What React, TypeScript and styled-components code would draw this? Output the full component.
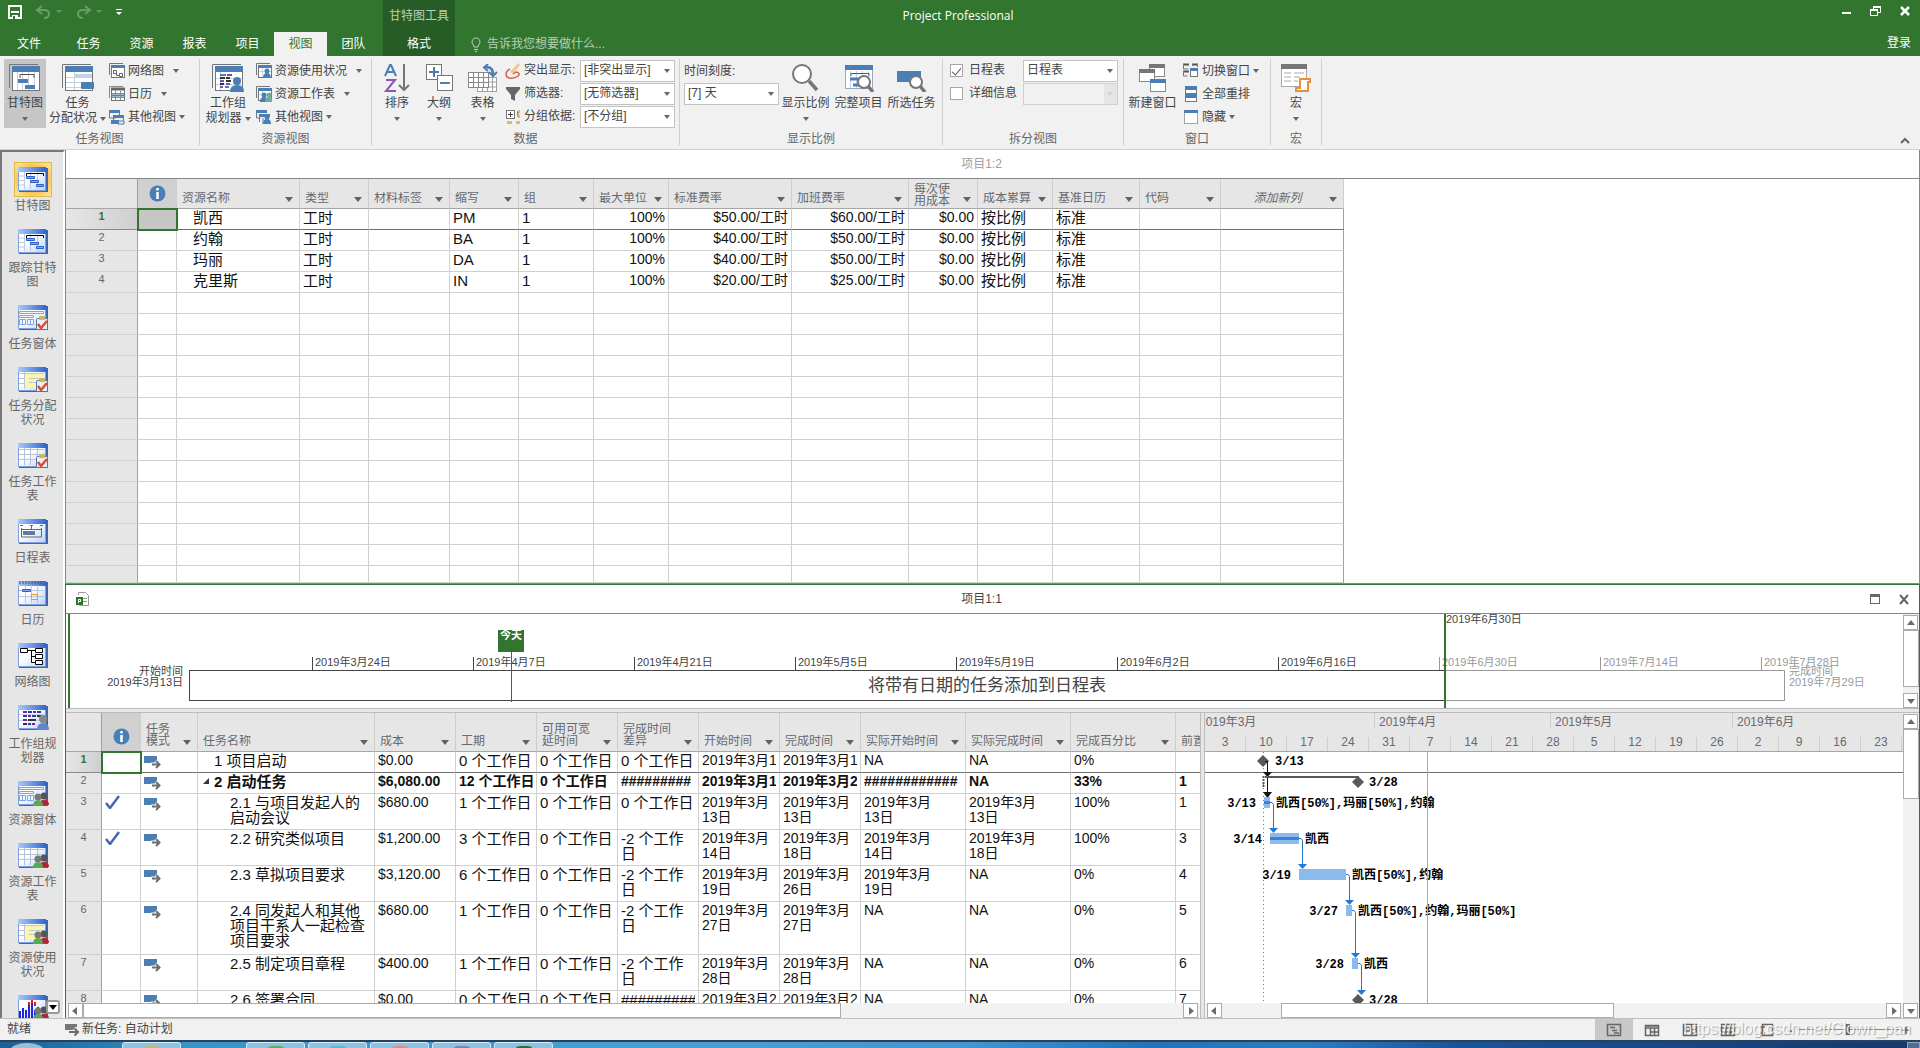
import React from "react";
import styled, { createGlobalStyle, css } from "styled-components";

const GREEN = "#31752f";
const BLUE = "#4a7eb5";
const GREY = "#767676";

const GlobalStyle = createGlobalStyle`
  * { box-sizing: border-box; }
  body { margin: 0; background: #fff; }
  body, button, select, input {
    font-family: "Liberation Sans", "Noto Sans CJK SC", sans-serif;
    font-size: 12px;
    line-height: 15px;
    color: #444;
  }
  button { border: 0; padding: 0; background: none; }
  svg { display: block; flex: none; }
`;

const Page = styled.div`
  display: flex;
  flex-direction: column;
  height: 100vh;
  overflow: hidden;
`;

/* ---------- title bar ---------- */

const Header = styled.header`
  display: grid;
  flex: none;
  height: 56px;
  background: ${GREEN};
  color: #fff;
`;
const HeaderLayer = styled.div`
  grid-area: 1 / 1;
  display: flex;
`;
const AppTitle = styled.h1`
  grid-area: 1 / 1;
  justify-self: center;
  margin: 0;
  padding-right: 4px;
  font: 400 12px/32px "Open Sans", "Noto Sans", sans-serif;
`;
const HeaderLeft = styled.div`
  display: flex;
  flex-direction: column;
  width: 383px;
`;
const QuickBar = styled.div`
  display: flex;
  align-items: center;
  height: 24px;
  padding-left: 8px;
  gap: 11px;
`;
const Tabs = styled.nav`
  display: flex;
  height: 24px;
  margin-top: auto;
`;
const Tab = styled.button<{ $active?: boolean; $wide?: boolean }>`
  width: ${(p) => (p.$wide ? "62px" : "53px")};
  padding: 0 ${(p) => (p.$wide ? "4px" : "0")} 0 0;
  color: ${(p) => (p.$active ? GREEN : "#fff")};
  background: ${(p) => (p.$active ? "#f1f1f1" : "transparent")};
`;
const ContextTabs = styled.div`
  display: flex;
  flex-direction: column;
  justify-content: space-between;
  width: 72px;
  background: #265c25;
  color: #b9cfb8;
  text-align: center;
  line-height: 32px;
`;
const ContextTab = styled.button`
  height: 24px;
  color: #fff;
`;
const TellMe = styled.button`
  display: flex;
  align-items: center;
  align-self: flex-end;
  gap: 5px;
  height: 24px;
  padding-left: 15px;
  color: #b9cfb8;
`;
const HeaderRight = styled.div`
  display: flex;
  flex-direction: column;
  justify-content: space-between;
  align-items: flex-end;
  height: 56px;
  margin-left: auto;
  padding: 4px 9px 5px 0;
`;
const WindowButtons = styled.div`
  display: flex;
  gap: 16px;
`;
const SignIn = styled.a`
  color: #fff;
  text-decoration: none;
`;

/* ---------- ribbon ---------- */

const Ribbon = styled.div`
  display: flex;
  flex: none;
  height: 94px;
  background: #f1f1f1;
  border-bottom: 1px solid #d2d2d2;
`;
const GroupBox = styled.section<{ $width: number }>`
  display: flex;
  flex-direction: column;
  flex: none;
  width: ${(p) => p.$width}px;
  margin: 3px 0 4px;
  border-right: 1px solid #d0d0d0;
`;
const GroupBody = styled.div<{ $pad: number; $gap: number }>`
  display: flex;
  height: 70px;
  gap: ${(p) => p.$gap}px;
  padding-left: ${(p) => p.$pad}px;
`;
const GroupLabel = styled.div`
  margin-top: 5px;
  line-height: 12px;
  text-align: center;
  color: #666;
`;
const BigBtn = styled.button<{ $width: number; $pressed?: boolean }>`
  display: flex;
  flex-direction: column;
  align-items: center;
  flex: none;
  width: ${(p) => p.$width}px;
  padding-top: 5px;
  white-space: nowrap;
  background: ${(p) => (p.$pressed ? "#c6c6c6" : "transparent")};
`;
const BigIcon = styled.span`
  height: 28px;
  margin-bottom: 4px;
`;
const BigLine = styled.span`
  display: flex;
  align-items: center;
  justify-content: center;
  gap: 3px;
  height: 15px;
`;
const Column = styled.div`
  display: grid;
  grid-auto-rows: 23px;
  align-content: start;
  justify-items: start;
`;
const SmallBtn = styled.button<{ $gap?: number }>`
  display: flex;
  align-items: center;
  height: 23px;
  padding-top: 1px;
  white-space: nowrap;
  svg { margin-right: 3px; }
  i { margin-left: ${(p) => p.$gap ?? 3}px; }
`;
const Caret = styled.i<{ $light?: boolean }>`
  display: inline-block;
  border: 3px solid transparent;
  border-top: 4px solid ${(p) => (p.$light ? "#b5b5b5" : "#666")};
  border-bottom: 0;
`;
const FieldRow = styled.label`
  display: grid;
  grid-template-columns: 19px 56px auto;
  align-items: center;
  height: 23px;
  white-space: nowrap;
`;
const SelectBox = styled.span`
  display: grid;
  align-items: center;
  width: 95px;
  ${Caret} {
    grid-area: 1 / 1;
    justify-self: end;
    margin-right: 5px;
    pointer-events: none;
  }
`;
const Select = styled.select`
  grid-area: 1 / 1;
  appearance: none;
  width: 100%;
  height: 22px;
  padding: 0 3px;
  border: 1px solid #c3c3c3;
  border-radius: 0;
  background: #fff;
  &:disabled { background: linear-gradient(90deg, #f1f1f1 80px, #e1e1e1 80px); }
`;
const Check = styled.label`
  display: flex;
  align-items: center;
  gap: 6px;
  width: 73px;
  height: 23px;
  white-space: nowrap;
`;
const Tick = styled.input`
  appearance: none;
  display: grid;
  place-items: center;
  width: 13px;
  height: 13px;
  margin: 0;
  border: 1px solid #a6a6a6;
  background: #fff;
  &:checked::after {
    content: "";
    width: 4px;
    height: 8px;
    border: solid #555;
    border-width: 0 1px 1px 0;
    transform: rotate(40deg);
  }
`;
const CollapseBtn = styled.button`
  align-self: flex-end;
  margin: 0 10px 5px auto;
`;

/* ---------- body ---------- */

const Body = styled.div`
  display: grid;
  grid-template-columns: 65px minmax(0, 1fr);
  flex: 1;
  min-height: 0;
`;
const ViewBar = styled.nav`
  display: grid;
  min-height: 0;
  overflow: hidden;
  border-left: 2px solid #777;
  border-top: 2px solid #777;
  border-right: 2px solid #fff;
  background: #e6e6e6;
`;
const ViewList = styled.div`
  grid-area: 1 / 1;
  display: flex;
  flex-direction: column;
  align-items: center;
  gap: 11px;
  min-height: 0;
  overflow: hidden;
  padding-top: 10px;
`;
const ViewItem = styled.button`
  display: flex;
  flex-direction: column;
  align-items: center;
  flex: none;
  width: 61px;
  color: #666;
  line-height: 14px;
  white-space: pre;
`;
const ViewIcon = styled.span<{ $active?: boolean }>`
  display: grid;
  place-items: center;
  width: 38px;
  height: 35px;
  margin-bottom: 2px;
  ${(p) =>
    p.$active &&
    css`
      border: 1px solid #e0b94e;
      background: radial-gradient(#f7a81b 30%, #fbe08a 85%);
    `}
`;
const MoreViews = styled.button`
  grid-area: 1 / 1;
  place-self: end;
  display: grid;
  place-items: center;
  width: 14px;
  height: 14px;
  margin: 0 3px 4px 0;
  border: 2px solid #999;
  border-radius: 3px;
  background: #fff;
`;

const Main = styled.main`
  display: flex;
  flex-direction: column;
  min-width: 0;
  min-height: 0;
`;
const TopWindow = styled.section`
  flex: none;
  border: solid #84888c;
  border-width: 0 1px 1px;
  background: #fff;
`;
const BottomWindow = styled.section`
  display: flex;
  flex-direction: column;
  flex: 1;
  min-height: 0;
  border: solid ${GREEN};
  border-width: 1px 1px 0;
  background: #fff;
`;
const WindowTitle = styled.div<{ $dim?: boolean }>`
  display: grid;
  grid-template-columns: 1fr auto 1fr;
  align-items: center;
  flex: none;
  height: 29px;
  padding: 0 9px;
  border-bottom: 1px solid #84888c;
  color: ${(p) => (p.$dim ? "#a0a0a0" : "#444")};
`;
const WindowName = styled.span`
  grid-column: 2;
  padding-right: 22px;
`;
const TitleTools = styled.span`
  display: flex;
  justify-content: flex-end;
  gap: 18px;
`;

/* ---------- data grids ---------- */

const Grid = styled.table<{ $width: number }>`
  width: ${(p) => p.$width}px;
  table-layout: fixed;
  border-collapse: separate;
  border-spacing: 0;
`;
const HeadCell = styled.th<{ $h: number; $dark?: boolean; $edge?: boolean }>`
  height: ${(p) => p.$h}px;
  padding: 0;
  vertical-align: bottom;
  font-weight: 400;
  text-align: left;
  color: #666a70;
  background: ${(p) => (p.$dark ? "#d0d0d0" : "#e6e6e6")};
  border-right: 1px solid ${(p) => (p.$edge ? "#a0a0a0" : "#cdcdcd")};
  border-bottom: 1px solid #a6a6a6;
`;
const HeadInner = styled.div<{ $drop: number; $center?: boolean }>`
  display: flex;
  align-items: flex-end;
  justify-content: space-between;
  padding: 0 6px ${(p) => p.$drop}px 5px;
  line-height: 12px;
  white-space: pre;
  overflow: hidden;
  span { flex: 1; text-align: ${(p) => (p.$center ? "center" : "left")}; }
  i { margin-bottom: ${(p) => 6 - p.$drop}px; }
`;
const HeadArrow = styled.i`
  flex: none;
  border: 4px solid transparent;
  border-top: 5px solid #5f6368;
  border-bottom: 0;
`;
const HeadIcon = styled.div`
  display: grid;
  justify-content: center;
  padding-bottom: 6px;
`;
const RowNo = styled.th<{ $current?: boolean }>`
  padding: 0;
  vertical-align: top;
  text-align: center;
  font-size: 11px;
  font-weight: ${(p) => (p.$current ? 700 : 400)};
  color: ${(p) => (p.$current ? GREEN : "#666")};
  background: ${(p) => (p.$current ? "linear-gradient(90deg, #e6e6e6, #cfcfcf)" : "#e6e6e6")};
  border-right: 1px solid #a0a0a0;
  border-bottom: 1px solid ${(p) => (p.$current ? "#8a8a8a" : "#d0d0d0")};
`;
const Cell = styled.td<{
  $current?: boolean;
  $bold?: boolean;
  $right?: boolean;
  $small?: boolean;
  $indent?: number;
  $last?: boolean;
}>`
  padding: 1px 3px 0 ${(p) => p.$indent ?? 3}px;
  vertical-align: top;
  font-size: ${(p) => (p.$small ? "14px" : "15px")};
  line-height: 15px;
  font-weight: ${(p) => (p.$bold ? 700 : 400)};
  text-align: ${(p) => (p.$right ? "right" : "left")};
  color: #111;
  white-space: pre;
  border-right: 1px solid ${(p) => (p.$last ? "#a0a0a0" : "#d0d0d0")};
  border-bottom: 1px solid ${(p) => (p.$current ? "#6e6e6e" : "#d0d0d0")};
`;
const Clip = styled.div`
  overflow: hidden;
`;
const SelectedCell = styled(Cell)<{ $filled?: boolean }>`
  outline: 2px solid ${GREEN};
  outline-offset: -1px;
  background: ${(p) => (p.$filled ? "#c6c6c6" : "#fff")};
`;
const Row = styled.tr<{ $h: number }>`
  height: ${(p) => p.$h}px;
`;
const NameText = styled.div`
  display: flex;
`;
const Outline = styled.span<{ $w: number }>`
  width: ${(p) => p.$w}px;
  flex: none;
  svg { margin: 4px 0 0 5px; }
`;

/* ---------- timeline ---------- */

const TimelineRow = styled.div`
  display: flex;
  flex: none;
  height: 94px;
`;
const Timeline = styled.div`
  position: relative;
  display: grid;
  grid-template-columns: 119px minmax(0, 1fr) 118px;
  grid-template-rows: 43px 13px 31px;
  flex: 1;
  min-width: 0;
  overflow: hidden;
  margin-left: 2px;
  border-left: 2px solid ${GREEN};
  font-size: 11px;
  line-height: 11px;
  white-space: nowrap;
`;
const TickRow = styled.div`
  grid-area: 2 / 2;
  display: flex;
  min-width: 0;
  padding-left: 123px;
`;
const DateTick = styled.div<{ $dim?: boolean }>`
  flex: 0 0 161px;
  height: 13px;
  padding-left: 2px;
  line-height: 10px;
  border-left: 1px solid ${(p) => (p.$dim ? "#999" : "#444")};
  color: ${(p) => (p.$dim ? "#999" : "#444")};
`;
const Span = styled.div`
  grid-area: 3 / 2;
  display: grid;
  grid-template-columns: 1256fr 339fr;
`;
const SpanPart = styled.div<{ $dim?: boolean }>`
  grid-area: 1 / ${(p) => (p.$dim ? 2 : 1)};
  border: 1px solid ${(p) => (p.$dim ? "#999" : "#444")};
  border-width: ${(p) => (p.$dim ? "1px 1px 1px 0" : "1px 0 1px 1px")};
`;
const SpanText = styled.div`
  grid-area: 1 / 1 / 2 / 3;
  place-self: center;
  font-size: 17px;
  line-height: 20px;
  color: #444;
`;
const EndLabel = styled.div<{ $end?: boolean }>`
  grid-area: 3 / ${(p) => (p.$end ? 3 : 1)};
  padding: 0 ${(p) => (p.$end ? "0 0 4px" : "6px 0 0")};
  margin-top: -4px;
  text-align: ${(p) => (p.$end ? "left" : "right")};
  color: ${(p) => (p.$end ? "#999" : "#444")};
`;
const TodayMark = styled.div`
  position: absolute;
  left: 428px;
  top: 16px;
  width: 26px;
  height: 22px;
  background: ${GREEN};
  color: #fff;
  font-weight: 700;
  text-align: center;
  &::after {
    content: "";
    position: absolute;
    left: 13px;
    top: 22px;
    width: 1px;
    height: 50px;
    background: ${GREEN};
  }
`;
const RangeMark = styled.div`
  position: absolute;
  left: 1374px;
  top: 0;
  height: 94px;
  border-left: 2px solid ${GREEN};
  color: #444;
`;

/* ---------- scroll bars and splitters ---------- */

const HSplit = styled.div`
  flex: none;
  height: 5px;
  border: solid #bcbcbc;
  border-width: 1px 0;
  background: #e6e6e6;
`;
const VSplit = styled.div`
  border: solid #bcbcbc;
  border-width: 0 1px;
  background: #e6e6e6;
`;
const ScrollBar = styled.div<{ $vertical?: boolean }>`
  display: flex;
  flex: none;
  flex-direction: ${(p) => (p.$vertical ? "column" : "row")};
  ${(p) => (p.$vertical ? "width: 16px; padding: 1px 0 0;" : "height: 15px; padding: 0 2px;")}
  background: #f2f2f2;
`;
const ScrollBtn = styled.button`
  display: grid;
  place-items: center;
  flex: none;
  width: 15px;
  height: 15px;
  border: 1px solid #ababab;
  background: #fff;
`;
const Thumb = styled.div<{ $grow: number }>`
  flex: ${(p) => p.$grow} 1 0;
  border: 1px solid #ababab;
  background: #fff;
`;
const Track = styled.div<{ $grow: number }>`
  flex: ${(p) => p.$grow} 1 0;
`;

const SplitArea = styled.div`
  display: grid;
  grid-template-columns: minmax(0, 1134fr) 5px minmax(0, 698fr) 16px;
  grid-template-rows: minmax(0, 1fr);
  flex: 1;
  min-height: 0;
`;
const Pane = styled.div`
  display: flex;
  flex-direction: column;
  min-width: 0;
  min-height: 0;
`;
const PaneView = styled.div`
  flex: 1;
  min-height: 0;
  overflow: hidden;
`;
const Scale = styled.div`
  height: 39px;
  overflow: hidden;
  background: #e6e6e6;
  border-bottom: 1px solid #a6a6a6;
  color: #666a70;
`;
const Months = styled.div`
  display: flex;
  height: 24px;
`;
const Month = styled.div<{ $width: number; $cut?: boolean }>`
  flex: none;
  width: ${(p) => p.$width}px;
  height: 16px;
  padding: 2px 0 0 4px;
  border-right: 1px solid #cdcdcd;
  white-space: nowrap;
  overflow: hidden;
  text-indent: ${(p) => (p.$cut ? "-10px" : "0")};
`;
const Days = styled.div`
  display: flex;
`;
const Day = styled.div`
  flex: 0 0 41px;
  height: 14px;
  line-height: 10px;
  text-align: center;
  border-right: 1px solid #cdcdcd;
`;
const GanttText = styled.text`
  font: 700 12px "Liberation Mono", "Noto Sans CJK SC", monospace;
  fill: #000;
`;

/* ---------- status bar and task bar ---------- */

const Status = styled.footer`
  display: flex;
  align-items: center;
  flex: none;
  height: 22px;
  padding: 0 9px 0 7px;
  border-top: 1px solid #c0c0c0;
  background: #f1f1f1;
  white-space: nowrap;
`;
const StatusTask = styled.button`
  display: flex;
  align-items: center;
  gap: 1px;
  margin-left: 34px;
`;
const StatusRight = styled.div`
  position: relative;
  display: flex;
  align-items: center;
  margin-left: auto;
`;
const ViewBtn = styled.button<{ $active?: boolean }>`
  display: grid;
  place-items: center;
  width: 38px;
  height: 21px;
  background: ${(p) => (p.$active ? "#c8c8c8" : "transparent")};
`;
const Zoom = styled.input`
  appearance: none;
  width: 102px;
  height: 1px;
  margin: 0 2px;
  background: #8a8a8a;
  &::-webkit-slider-thumb {
    appearance: none;
    width: 4px;
    height: 11px;
    background: #666;
  }
`;
const ZoomBtn = styled.button`
  width: 10px;
  font-weight: 700;
  font-size: 15px;
  color: #666;
`;
const Watermark = styled.span`
  position: absolute;
  right: 0;
  top: 0;
  font-size: 16px;
  line-height: 20px;
  color: rgba(255, 255, 255, 0.85);
  text-shadow: 1px 1px 1px rgba(110, 110, 110, 0.6);
  pointer-events: none;
`;
const TaskBar = styled.div`
  display: flex;
  flex: none;
  height: 8px;
  overflow: hidden;
  border-top: 2px solid #27425c;
  background: linear-gradient(90deg, #1b5f94 0, #3a94c8 10%, #48a0d2 35%, #4796cf 50%, #2472b8 60%, #2f7cc0 68%, #1b5496 76%, #14396c 100%);
`;
const Orb = styled.div`
  width: 34px;
  height: 16px;
  margin: 1px 78px 0 10px;
  border-radius: 50%;
  background: #9dbdd4;
`;
const TaskBtn = styled.button<{ $gapAfter?: number; $tint: string }>`
  display: flex;
  justify-content: center;
  flex: none;
  width: 59px;
  height: 12px;
  margin-right: ${(p) => p.$gapAfter ?? 3}px;
  border: 1px solid #d6ecf8;
  border-radius: 3px 3px 0 0;
  background: #8cc3e2;
  &::after {
    content: "";
    width: 20px;
    height: 10px;
    margin-top: 3px;
    border-radius: 6px 6px 0 0;
    background: ${(p) => p.$tint};
  }
`;
const ShowDesktop = styled.button`
  width: 13px;
  height: 12px;
  margin-left: auto;
  border: 1px solid #8fa6bd;
  background: #4b6d92;
`;

/* ---------- ribbon icons ---------- */

const Svg = ({ w, h, children }: { w: number; h: number; children: React.ReactNode }) => (
  <svg width={w} height={h} viewBox={`0 0 ${w} ${h}`} aria-hidden="true">
    {children}
  </svg>
);

const BigSheet = ({ children }: { children: React.ReactNode }) => (
  <Svg w={32} h={28}>
    <path d="M.5 24V.5H29" fill="none" stroke={GREY} />
    <rect x="3.500" y="3.500" width="27" height="23" fill="#fff" stroke={GREY} />
    <rect x="3" y="2" width="28" height="6" fill={BLUE} />
    {children}
  </Svg>
);
const GanttBig = () => (
  <BigSheet>
    <path d="M8.500 8v18M13.500 8v18M19.500 8v18M25.500 8v18" stroke="#c3d3e5" />
    <path d="M11 14v-3.500h14V14" fill="none" stroke="#555" />
    <rect x="9" y="15" width="10" height="4" fill={BLUE} />
    <rect x="16" y="21" width="10" height="4" fill={BLUE} />
  </BigSheet>
);
const UsageBig = () => (
  <BigSheet>
    <path d="M4 13.500h26M4 18.500h26M4 23.500h26M12.500 8v18" stroke="#c3d3e5" />
    <rect x="13" y="10" width="17" height="3" fill="#c3d3e5" />
    <rect x="19" y="18" width="13" height="7" rx="1" fill={BLUE} />
  </BigSheet>
);
const TeamBig = () => (
  <BigSheet>
    <path d="M8.500 8v18M4 14.500h26M4 20.500h26" stroke="#c3d3e5" />
    <path d="M8 11h6M13 23h4" stroke={BLUE} strokeWidth="2" />
    <path d="M15 11h5M8 17h4M14 20h4M8 23h3" stroke="#7d4ba8" strokeWidth="2" />
    <path d="M8 14h5M14 17h5M8 20h4M14 14h4" stroke="#333" strokeWidth="2" />
    <circle cx="25" cy="17" r="4" fill={BLUE} />
    <path d="M18 28q0-7 7-7t7 7z" fill={BLUE} />
  </BigSheet>
);
const SortBig = () => (
  <Svg w={28} h={28}>
    <path d="M2 12 7 1h1l5 11M4 8h7" fill="none" stroke={BLUE} strokeWidth="2" />
    <path d="M3 16h9L3 27h10" fill="none" stroke="#8a56b8" strokeWidth="2" />
    <path d="M21 0v26M16 21l5 5 5-5" fill="none" stroke={GREY} strokeWidth="2" />
  </Svg>
);
const OutlineBig = () => (
  <Svg w={28} h={28}>
    <rect x="1.500" y=".5" width="15" height="15" fill="#fff" stroke={GREY} />
    <path d="M9 3v10M4 8h10" stroke={BLUE} strokeWidth="2" />
    <rect x="12.500" y="11.500" width="15" height="15" fill="#fff" stroke={GREY} />
    <path d="M15 19h10" stroke={BLUE} strokeWidth="2" />
  </Svg>
);
const TablesBig = () => (
  <Svg w={30} h={28}>
    <rect x="9.500" y="13.500" width="19" height="14" fill="#fff" stroke="#a0a0a0" />
    <path d="M10 18h18M10 23h18M14.500 14v14M19.500 14v14M24.500 14v14" stroke="#a0a0a0" />
    <rect x=".5" y="8.500" width="20" height="15" fill="#fff" stroke="#888" />
    <path d="M1 13.500h19M1 18.500h19M5.500 9v15M10.500 9v15M15.500 9v15" stroke="#888" />
    <path d="M16 3.500q9-2 9 7" fill="none" stroke={BLUE} strokeWidth="2.500" />
    <path d="M20 0l-4 3.500 4 3.500M21 8l4 4 4-4" fill="none" stroke={BLUE} strokeWidth="2" />
  </Svg>
);
const Lens = ({ x, y, r }: { x: number; y: number; r: number }) => (
  <>
    <circle cx={x} cy={y} r={r} fill="#fff" stroke={GREY} strokeWidth="2" />
    <path d={`M${x + r - 2} ${y + r - 2}l${r - 1} ${r}`} stroke={GREY} strokeWidth="3.500" />
  </>
);
const ZoomBig = () => (
  <Svg w={28} h={28}>
    <Lens x={10} y={10} r={9} />
  </Svg>
);
const WholeBig = () => (
  <Svg w={30} h={28}>
    <rect x="1.500" y="2.500" width="27" height="22" fill="#fff" stroke="#9ab" />
    <rect x="1" y="1" width="28" height="5" fill={BLUE} />
    <path d="M6.500 7v17M12.500 7v17M18.500 7v17M24.500 7v17" stroke="#c3d3e5" />
    <path d="M7 12V9.500h18V12" fill="none" stroke="#555" />
    <path d="M6 15h9M9 21h6" stroke={BLUE} strokeWidth="3" />
    <Lens x={20} y={18} r={6} />
  </Svg>
);
const SelectedBig = () => (
  <Svg w={30} h={28}>
    <rect x="0" y="7" width="24" height="11" fill={BLUE} />
    <Lens x={19} y={18} r={6} />
  </Svg>
);
const MiniWindow = ({ x, y, c = GREY }: { x: number; y: number; c?: string }) => (
  <>
    <rect x={x + 0.5} y={y + 0.5} width="15" height="12" fill="#fff" stroke="#8a8a8a" />
    <rect x={x} y={y} width="16" height="4" fill={c} />
  </>
);
const NewWindowBig = () => (
  <Svg w={28} h={28}>
    <MiniWindow x={10} y={0} />
    <MiniWindow x={0} y={5} />
    <MiniWindow x={11} y={15} c={BLUE} />
  </Svg>
);
const MacroBig = () => (
  <Svg w={32} h={28}>
    <rect x="1.500" y="0.500" width="25" height="22" fill="#fff" stroke="#aaa" />
    <rect x="1" y="0" width="26" height="5" fill={GREY} />
    <path d="M4 9h7M4 13h7M4 17h7M14 9h10M14 13h6M14 17h4" stroke="#aaa" />
    <path d="M20 15h10v3h-2v9H16v-3h4z" fill="#fff" stroke="#e68f3c" strokeWidth="2" />
  </Svg>
);

const SmallSheet = ({ children }: { children?: React.ReactNode }) => (
  <Svg w={16} h={16}>
    <path d="M.5 12V.5H14" fill="none" stroke={GREY} />
    <rect x="2.500" y="2.500" width="13" height="12" fill="#fff" stroke={GREY} />
    <rect x="2" y="2" width="14" height="3" fill={BLUE} />
    {children}
  </Svg>
);
const Person = ({ x, y, c = BLUE }: { x: number; y: number; c?: string }) => (
  <>
    <circle cx={x} cy={y} r="2.500" fill={c} />
    <path d={`M${x - 4} ${y + 7}q0-5 4-5t4 5z`} fill={c} />
  </>
);
const NetworkSmall = () => (
  <SmallSheet>
    <path d="M4.500 7.500h3v3h-3zM10.500 10.500h3v3h-3zM7.500 9v3.500h3" fill="none" stroke="#666" />
  </SmallSheet>
);
const CalendarSmall = () => (
  <Svg w={16} h={16}>
    <rect x="2.500" y="2.500" width="13" height="12" fill="#fff" stroke={GREY} />
    <path d="M2 3h14" stroke="#666" strokeWidth="3" />
    <path d="M.5 12V.5H14M3 7.500h12M3 11.500h12M6.500 5v9M11.500 5v9" fill="none" stroke="#8a8a8a" />
    <path d="M7 9.500h4M12 9.500h3M3 9.500h3" stroke={BLUE} strokeWidth="2" />
  </Svg>
);
const OtherSmall = () => (
  <Svg w={16} h={16}>
    <rect x="0" y="1" width="11" height="3" fill={BLUE} />
    <path d="M.5 4v5h6M10.500 4v2" fill="none" stroke={GREY} />
    <rect x="4" y="6" width="11" height="3" fill={BLUE} />
    <path d="M4.500 9v3M14.500 9v3" stroke={GREY} />
    <rect x="2" y="11" width="8" height="4" fill={BLUE} />
    <path d="M9 12h6v3H9" fill="none" stroke={BLUE} />
  </Svg>
);
const ResUsageSmall = () => (
  <SmallSheet>
    <path d="M3 8.500h12M6.500 5v9" stroke="#c3d3e5" />
    <Person x={11} y={8} />
  </SmallSheet>
);
const ResSheetSmall = () => (
  <SmallSheet>
    <path d="M3 8.500h12M6.500 5v9" stroke="#c3d3e5" />
    <Person x={8} y={9} />
    <Person x={13} y={9} c="#6fae95" />
  </SmallSheet>
);
const ResOtherSmall = () => (
  <Svg w={16} h={16}>
    <rect x="0" y="1" width="11" height="3" fill={BLUE} />
    <path d="M.5 4v5h4M3.500 8v5M5 7h6" fill="none" stroke={GREY} />
    <rect x="3" y="5" width="11" height="3" fill={BLUE} />
    <Person x={11} y={8} />
    <path d="M7 9v6" stroke={BLUE} />
  </Svg>
);
const HighlightSmall = () => (
  <Svg w={16} h={16}>
    <path d="M5 9 13 0l2 2-7 9z" fill="#f3c98b" />
    <path d="M5 6q-4 2-4 5t3 4q5 1 9-2 3-3-2-4l-3 2" fill="none" stroke="#d8624a" strokeWidth="1.500" />
  </Svg>
);
const FilterSmall = () => (
  <Svg w={16} h={16}>
    <path d="M1 1h14v2l-5 6v6l-4-2V9L1 3z" fill="#666" />
  </Svg>
);
const GroupSmall = () => (
  <Svg w={16} h={16}>
    <rect x="1.500" y="1.500" width="8" height="8" fill="#fff" stroke={GREY} />
    <path d="M3 5.500h5M5.500 3v5M12 3h1v5" fill="none" stroke="#444" />
    <path d="M13 1h2v3h-2zM2 12h5v3H2zM11 12h4v3h-4zM13 6h2v3h-2z" fill="#e6b86a" />
  </Svg>
);
const SwitchSmall = () => (
  <Svg w={16} h={16}>
    <path d="M0 1.500h6M0 8.500h6M9 1.500h6" stroke="#555" strokeWidth="2" />
    <path d="M.5 1v5h5M.5 8v5h4M9.500 1v2M14.500 1v3" fill="none" stroke={GREY} />
    <rect x="7.500" y="6.500" width="7" height="7" fill="#fff" stroke={GREY} />
    <path d="M7 6.500h8" stroke={BLUE} strokeWidth="3" />
  </Svg>
);
const ArrangeSmall = () => (
  <Svg w={16} h={16}>
    <rect x="2.500" y=".5" width="11" height="15" fill="#fff" stroke={GREY} />
    <path d="M2 2h12M2 10h12" stroke={BLUE} strokeWidth="4" />
    <path d="M2 7.500h12" stroke={GREY} />
  </Svg>
);
const HideSmall = () => (
  <Svg w={16} h={16}>
    <rect x="1.500" y="3.500" width="13" height="11" fill="#fff" stroke="#555" strokeDasharray="1 1" />
    <path d="M1 2.500h14" stroke={BLUE} strokeWidth="3" />
  </Svg>
);

const InfoIcon = () => (
  <Svg w={17} h={17}>
    <circle cx="8.500" cy="8.500" r="8" fill={BLUE} />
    <path d="M8.500 3v2.500M8.500 7v7" stroke="#fff" strokeWidth="2.500" />
  </Svg>
);
const ModeIcon = ({ c = BLUE }: { c?: string }) => (
  <Svg w={17} h={16}>
    <rect x="0" y="3" width="13" height="7" fill={c} />
    <path d="M7 11.500h9M12 7.500l4 4-4 4" fill="none" stroke="#fff" strokeWidth="4" />
    <path d="M8 11.500h7M12 8l3.500 3.500L12 15" fill="none" stroke="#6c6c6c" strokeWidth="2" />
  </Svg>
);
const StatusTaskIcon = () => (
  <Svg w={16} h={14}>
    <rect x="0" y="1" width="12" height="6" fill={GREY} />
    <path d="M4 9h9M9.500 5l4 4-4 4" fill="none" stroke="#f1f1f1" strokeWidth="4" />
    <path d="M4 9h9M9.500 5.500 13 9l-3.500 3.500" fill="none" stroke="#6c6c6c" strokeWidth="2" />
  </Svg>
);
const DoneIcon = () => (
  <Svg w={16} h={14}>
    <path d="M1 8l4 5L14 1" fill="none" stroke="#4568b0" strokeWidth="2.500" />
  </Svg>
);

/* ---------- view bar icons ---------- */

type Kind = "gantt" | "form" | "usage" | "sheet" | "timeline" | "calendar" | "network" | "team" | "graph";
type Badge = "task" | "people" | "person";

const art: Record<Kind, React.ReactNode> = {
  gantt: (
    <>
      <path d="M2 10h6M2 14.500h6M2 19h6M7.500 6v17M13.500 6v17M20.500 6v17" stroke="#c0cbe0" />
      <path d="M9.500 10V7.500h17V10" fill="none" stroke="#000" />
      <path d="M9.500 10.500h8v2h-8zM13.500 14.500h8v2h-8zM19.500 18.500h7v2h-7z" fill="#7fa6f0" stroke="#2f5fc8" />
    </>
  ),
  form: (
    <path d="M2.500 7.500h24v2h-24zM2.500 11.500h14v2h-14zM2.500 15.500h6v5h-6zM10.500 15.500h6v5h-6zM5.500 16v4M13.500 16v4" fill="#f4f8ff" stroke="#7fa3ea" />
  ),
  usage: (
    <>
      <rect x="8" y="8" width="19" height="14" fill="#fbf6a8" />
      <path d="M2 7.500h25M2 12.500h6M2 17.500h6M7.500 6v17M12 12.500h15M12 16.500h15" stroke="#b8c6e2" />
    </>
  ),
  sheet: <path d="M2 7.500h25M2 12.500h25M2 17.500h25M7.500 6v17M13.500 6v17M20.500 6v17" stroke="#b4c2de" />,
  timeline: (
    <>
      <path d="M4.500 10v9h20v-9M14.500 7v5M3 7.500h3M13 7.500h3M23 7.500h3M5 11.500h20" fill="none" stroke="#666" />
      <rect x="6" y="13" width="12" height="4" fill="#5e7ba6" />
    </>
  ),
  calendar: (
    <>
      <path d="M3 1v3M6 1v3M9 1v3M12 1v3M15 1v3M18 1v3M21 1v3M24 1v3" stroke="#555" />
      <path d="M2 10.500h25M2 16.500h25M8.500 5v18M14.500 5v18M20.500 5v18" stroke="#b8c6e2" />
      <path d="M5.500 9.500h8v2h-8z" fill="#7fa6f0" stroke="#2f5fc8" />
      <rect x="14.500" y="14.500" width="6" height="5" fill="none" stroke="#f09a2a" />
    </>
  ),
  network: (
    <path d="M3.500 6.500h7v4h-7zM18.500 6.500h7v4h-7zM18.500 12.500h7v4h-7zM18.500 18.500h7v4h-7zM11 8.500h7M14.500 9v11.500h4M14.500 14.500h4" fill="#fff" stroke="#000" />
  ),
  team: (
    <>
      <path d="M2 10.500h25M2 16.500h25" stroke="#c8d4ea" />
      <path d="M6 8h4M11 12h3M6 16h4M15 20h3M16 8h3" stroke="#7a1fa8" strokeWidth="2" />
      <path d="M11 8h4M6 12h4M15 12h4M11 20h3M20 8h4" stroke="#1d3fb0" strokeWidth="2" />
      <path d="M11 16h8M6 20h4M20 12h4" stroke="#333" strokeWidth="2" />
    </>
  ),
  graph: (
    <>
      <path d="M3 25V17M6 25V14M9 25V16M12 25V11M15 25V9M18 25v-9M21 25v-12" stroke="#1a28e0" strokeWidth="2" />
      <path d="M12 11V8M15 9V6M18 12V8" stroke="#e02020" strokeWidth="2" />
    </>
  ),
};
const badges: Record<Badge, React.ReactNode> = {
  task: (
    <>
      <rect x="19.500" y="14.500" width="11" height="11" rx="1" fill="#e8eefc" stroke="#56719e" />
      <rect x="22" y="12" width="6" height="4" rx="1" fill="#cdb65c" />
      <path d="M21 20l3 4 6-7" fill="none" stroke="#dd4a2c" strokeWidth="2.500" />
    </>
  ),
  people: (
    <>
      <circle cx="27" cy="16" r="3.500" fill="#555" />
      <path d="M22 25q0-5 5-5t5 5z" fill="#b32430" />
      <circle cx="21" cy="17" r="3.500" fill="#777" />
      <path d="M16 26q0-6 5-6t5 6z" fill="#5aa850" />
    </>
  ),
  person: (
    <>
      <circle cx="26" cy="15" r="4" fill="#888" />
      <path d="M20 26q0-7 6-7t6 7z" fill="#6286cc" />
    </>
  ),
};
const ViewArt = ({ kind, badge }: { kind: Kind; badge?: Badge }) => (
  <Svg w={32} h={27}>
    <defs>
      <linearGradient id="bar" x2="1">
        <stop offset="0" stopColor="#a9c8fa" />
        <stop offset="1" stopColor="#3465cf" />
      </linearGradient>
      <linearGradient id="page" x2="1" y2="1">
        <stop offset=".4" stopColor="#fff" />
        <stop offset="1" stopColor="#bdd4f8" />
      </linearGradient>
    </defs>
    <rect x="2" y="2" width="29" height="24" fill="#3a66b4" />
    <rect x="1.500" y="1.500" width="27" height="23" fill="url(#page)" stroke="#7fa0dc" />
    <rect x="1" y="1" width="28" height="5" fill="url(#bar)" />
    {art[kind]}
    {badge && badges[badge]}
  </Svg>
);

const views: { label: string; kind: Kind; badge?: Badge }[] = [
  { label: "甘特图", kind: "gantt" },
  { label: "跟踪甘特\n图", kind: "gantt" },
  { label: "任务窗体", kind: "form", badge: "task" },
  { label: "任务分配\n状况", kind: "usage", badge: "task" },
  { label: "任务工作\n表", kind: "sheet", badge: "task" },
  { label: "日程表", kind: "timeline" },
  { label: "日历", kind: "calendar" },
  { label: "网络图", kind: "network" },
  { label: "工作组规\n划器", kind: "team", badge: "person" },
  { label: "资源窗体", kind: "form", badge: "people" },
  { label: "资源工作\n表", kind: "sheet", badge: "people" },
  { label: "资源使用\n状况", kind: "usage", badge: "people" },
  { label: "", kind: "graph", badge: "people" },
];

/* ---------- data ---------- */

const resourceCols = [
  { t: "资源名称", w: 123 },
  { t: "类型", w: 69 },
  { t: "材料标签", w: 81 },
  { t: "缩写", w: 69 },
  { t: "组", w: 75 },
  { t: "最大单位", w: 75, num: true },
  { t: "标准费率", w: 123, num: true },
  { t: "加班费率", w: 117, num: true },
  { t: "每次使\n用成本", w: 69, num: true },
  { t: "成本累算", w: 75 },
  { t: "基准日历", w: 87 },
  { t: "代码", w: 81 },
  { t: "添加新列", w: 123, add: true },
];
const resources = [
  ["凯西", "工时", "", "PM", "1", "100%", "$50.00/工时", "$60.00/工时", "$0.00", "按比例", "标准", "", ""],
  ["约翰", "工时", "", "BA", "1", "100%", "$40.00/工时", "$50.00/工时", "$0.00", "按比例", "标准", "", ""],
  ["玛丽", "工时", "", "DA", "1", "100%", "$40.00/工时", "$50.00/工时", "$0.00", "按比例", "标准", "", ""],
  ["克里斯", "工时", "", "IN", "1", "100%", "$20.00/工时", "$25.00/工时", "$0.00", "按比例", "标准", "", ""],
];

const taskCols = [
  { t: "任务\n模式", w: 57 },
  { t: "任务名称", w: 177 },
  { t: "成本", w: 81 },
  { t: "工期", w: 81 },
  { t: "可用可宽\n延时间", w: 81 },
  { t: "完成时间\n差异", w: 81 },
  { t: "开始时间", w: 81 },
  { t: "完成时间", w: 81 },
  { t: "实际开始时间", w: 105 },
  { t: "实际完成时间", w: 105 },
  { t: "完成百分比", w: 105 },
  { t: "前置", w: 81 },
];
type Task = { h: number; name: string; done?: boolean; summary?: boolean; top?: boolean; v: string[] };
const tasks: Task[] = [
  { h: 21, name: "1 项目启动", top: true, v: ["$0.00", "0 个工作日", "0 个工作日", "0 个工作日", "2019年3月13日", "2019年3月13日", "NA", "NA", "0%", ""] },
  { h: 21, name: "2 启动任务", top: true, summary: true, v: ["$6,080.00", "12 个工作日", "0 个工作日", "#########", "2019年3月13日", "2019年3月28日", "############", "NA", "33%", "1"] },
  { h: 36, name: "2.1 与项目发起人的\n启动会议", done: true, v: ["$680.00", "1 个工作日", "0 个工作日", "0 个工作日", "2019年3月\n13日", "2019年3月\n13日", "2019年3月\n13日", "2019年3月\n13日", "100%", "1"] },
  { h: 36, name: "2.2 研究类似项目", done: true, v: ["$1,200.00", "3 个工作日", "0 个工作日", "-2 个工作\n日", "2019年3月\n14日", "2019年3月\n18日", "2019年3月\n14日", "2019年3月\n18日", "100%", "3"] },
  { h: 36, name: "2.3 草拟项目要求", v: ["$3,120.00", "6 个工作日", "0 个工作日", "-2 个工作\n日", "2019年3月\n19日", "2019年3月\n26日", "2019年3月\n19日", "NA", "0%", "4"] },
  { h: 53, name: "2.4 同发起人和其他\n项目干系人一起检查\n项目要求", v: ["$680.00", "1 个工作日", "0 个工作日", "-2 个工作\n日", "2019年3月\n27日", "2019年3月\n27日", "NA", "NA", "0%", "5"] },
  { h: 36, name: "2.5 制定项目章程", v: ["$400.00", "1 个工作日", "0 个工作日", "-2 个工作\n日", "2019年3月\n28日", "2019年3月\n28日", "NA", "NA", "0%", "6"] },
  { h: 21, name: "2.6 签署合同", v: ["$0.00", "0 个工作日", "0 个工作日", "#########", "2019年3月28日", "2019年3月28日", "NA", "NA", "0%", "7"] },
];
const durationCols = [1, 2, 3];

/* ---------- parts ---------- */

const Big = ({ icon, lines, width, caret, pressed }: { icon: React.ReactNode; lines: string[]; width: number; caret?: boolean; pressed?: boolean }) => (
  <BigBtn $width={width} $pressed={pressed}>
    <BigIcon>{icon}</BigIcon>
    <BigLine>{lines[0]}</BigLine>
    <BigLine>
      {lines[1]}
      {caret && <Caret />}
    </BigLine>
  </BigBtn>
);
const Small = ({ icon, text, caret, gap }: { icon: React.ReactNode; text: string; caret?: boolean; gap?: number }) => (
  <SmallBtn $gap={gap}>
    {icon}
    {text}
    {caret && <Caret />}
  </SmallBtn>
);
const Group = ({ width, label, pad = 4, gap = 0, children }: { width: number; label: string; pad?: number; gap?: number; children: React.ReactNode }) => (
  <GroupBox $width={width}>
    <GroupBody $pad={pad} $gap={gap}>
      {children}
    </GroupBody>
    <GroupLabel>{label}</GroupLabel>
  </GroupBox>
);
const Drop = ({ value, disabled, label }: { value: string; disabled?: boolean; label?: string }) => (
  <SelectBox>
    <Select defaultValue={value} disabled={disabled} aria-label={label}>
      <option>{value}</option>
    </Select>
    <Caret $light={disabled} />
  </SelectBox>
);
const arrows = {
  up: "M0 6h8L4 1z",
  down: "M0 2h8L4 7z",
  left: "M5 0v8L0 4z",
  right: "M2 0v8l5-4z",
};
const Arrow = ({ dir }: { dir: keyof typeof arrows }) => (
  <ScrollBtn aria-label={dir}>
    <Svg w={8} h={8}>
      <path d={arrows[dir]} fill="#6c6c6c" />
    </Svg>
  </ScrollBtn>
);
const Scroll = ({ vertical, before = 0, thumb, after }: { vertical?: boolean; before?: number; thumb: number; after: number }) => (
  <ScrollBar $vertical={vertical}>
    <Arrow dir={vertical ? "up" : "left"} />
    {before > 0 && <Track $grow={before} />}
    <Thumb $grow={thumb} />
    <Track $grow={after} />
    <Arrow dir={vertical ? "down" : "right"} />
  </ScrollBar>
);

const ResourceTable = () => (
  <Grid $width={1278}>
    <colgroup>
      <col style={{ width: 72 }} />
      <col style={{ width: 39 }} />
      {resourceCols.map((c) => (
        <col key={c.t} style={{ width: c.w }} />
      ))}
    </colgroup>
    <thead>
      <tr>
        <HeadCell $h={30} $edge />
        <HeadCell $h={30} $dark>
          <HeadIcon>
            <InfoIcon />
          </HeadIcon>
        </HeadCell>
        {resourceCols.map((c) => (
          <HeadCell key={c.t} $h={30}>
            <HeadInner $drop={c.t.includes("\n") ? 1 : 4} $center={c.add}>
              <span>{c.add ? <em>{c.t}</em> : c.t}</span>
              <HeadArrow />
            </HeadInner>
          </HeadCell>
        ))}
      </tr>
    </thead>
    <tbody>
      {Array.from({ length: 18 }, (_, r) => (
        <Row key={r} $h={r === 17 ? 17 : 21}>
          <RowNo $current={r === 0}>{r < 4 ? r + 1 : ""}</RowNo>
          {r === 0 ? <SelectedCell $filled $current /> : <Cell />}
          {resourceCols.map((c, i) => (
            <Cell key={c.t} $current={r === 0} $right={c.num} $small={c.num} $indent={i === 0 ? 16 : 3} $last={i === 12}>
              {resources[r]?.[i] ?? ""}
            </Cell>
          ))}
        </Row>
      ))}
    </tbody>
  </Grid>
);

const TaskTable = () => (
  <Grid $width={1191}>
    <colgroup>
      <col style={{ width: 36 }} />
      <col style={{ width: 39 }} />
      {taskCols.map((c, i) => (
        <col key={i} style={{ width: c.w }} />
      ))}
    </colgroup>
    <thead>
      <tr>
        <HeadCell $h={39} $edge />
        <HeadCell $h={39} $dark>
          <HeadIcon>
            <InfoIcon />
          </HeadIcon>
        </HeadCell>
        {taskCols.map((c, i) => (
          <HeadCell key={i} $h={39}>
            <HeadInner $drop={4}>
              <span>{c.t}</span>
              <HeadArrow />
            </HeadInner>
          </HeadCell>
        ))}
      </tr>
    </thead>
    <tbody>
      {tasks.map((t, r) => (
        <Row key={t.name} $h={t.h}>
          <RowNo $current={r === 0}>{r + 1}</RowNo>
          {r === 0 ? <SelectedCell $current /> : <Cell>{t.done && <DoneIcon />}</Cell>}
          <Cell $current={r === 0}>
            <ModeIcon />
          </Cell>
          <Cell $current={r === 0} $bold={t.summary} $indent={0}>
            <NameText>
              <Outline $w={t.top ? 16 : 32}>
                {t.summary && (
                  <Svg w={6} h={6}>
                    <path d="M6 0v6H0z" fill="#333" />
                  </Svg>
                )}
              </Outline>
              {t.name}
            </NameText>
          </Cell>
          {t.v.map((v, i) => (
            <Cell key={i} $current={r === 0} $bold={t.summary} $small={t.summary || !durationCols.includes(i)}>
              <Clip>{v}</Clip>
            </Cell>
          ))}
        </Row>
      ))}
    </tbody>
  </Grid>
);

const bars = [
  { x: 59, w: 6, y: 45, from: "3/13", who: "凯西[50%],玛丽[50%],约翰", end: 51, at: 71, done: true },
  { x: 65, w: 29, y: 81, from: "3/14", who: "凯西", end: 57, at: 100, done: true },
  { x: 94, w: 47, y: 117, from: "3/19", who: "凯西[50%],约翰", end: 86, at: 147 },
  { x: 141, w: 6, y: 153, from: "3/27", who: "凯西[50%],约翰,玛丽[50%]", end: 133, at: 153 },
  { x: 147, w: 6, y: 206, from: "3/28", who: "凯西", end: 139, at: 159 },
];
const links = [
  { x: 65, y: 51, to: 81 },
  { x: 94, y: 87, to: 117 },
  { x: 141, y: 123, to: 153 },
  { x: 147, y: 159, to: 206 },
  { x: 153, y: 212, to: 243 },
];
const Diamond = ({ x, y }: { x: number; y: number }) => <path d={`M${x} ${y - 6}l6 6-6 6-6-6z`} fill="#595959" />;

const GanttChart = () => (
  <svg width="100%" height="251" role="img" aria-label="甘特图">
    <path d="M0 20.500h2400" stroke="#6e6e6e" />
    <path d="M58.500 0v251" stroke="#777" strokeDasharray="1 3" />
    <Diamond x={58} y={9} />
    <path d="M60 9.500h2.500V43" fill="none" stroke="#111" />
    <path d="M58 20h9l-4.500 5zM58 40h9l-4.500 6z" fill="#111" />
    <path d="M60 25h94" stroke="#595959" strokeWidth="2" />
    <path d="M58.500 24v11" stroke="#595959" strokeWidth="2" strokeDasharray="2 1" />
    <Diamond x={153} y={30} />
    <GanttText x={70} y={13}>3/13</GanttText>
    <GanttText x={164} y={34}>3/28</GanttText>
    {bars.map((b) => (
      <g key={b.y}>
        <rect x={b.x} y={b.y} width={b.w} height="11" fill="#8bbbed" />
        {b.done && <rect x={b.x} y={b.y + 4} width={b.w} height="3" fill="#3c84d0" />}
        <GanttText x={b.end} y={b.y + 10} textAnchor="end">
          {b.from}
        </GanttText>
        <GanttText x={b.at} y={b.y + 10}>
          {b.who}
        </GanttText>
      </g>
    ))}
    {links.map((l) => (
      <g key={l.y}>
        <path d={`M${l.x} ${l.y - 0.5}h2l1.500 2V${l.to - 4}`} fill="none" stroke="#1f74cf" />
        <path d={`M${l.x - 1} ${l.to - 5}h9l-4.500 5z`} fill="#1f7ad8" />
      </g>
    ))}
    <Diamond x={153} y={248} />
    <GanttText x={164} y={252}>3/28</GanttText>
    <path d="M222.500 0v251" stroke="#8cc08c" />
  </svg>
);

const days = ["3", "10", "17", "24", "31", "7", "14", "21", "28", "5", "12", "19", "26", "2", "9", "16", "23"];
const ticks = ["2019年3月24日", "2019年4月7日", "2019年4月21日", "2019年5月5日", "2019年5月19日", "2019年6月2日", "2019年6月16日", "2019年6月30日", "2019年7月14日", "2019年7月28日"];

const statusIcons = [
  "M1.500 1.500h13v11h-13zM4 4.500h5M6 7.500h5M8 10h5",
  "M1.500 2.500h13v10h-13zM1 3h14M1 5h14M6.500 5v8M10.500 5v8M6 9h8",
  "M1.500 1.500h13v11h-13zM3 4h5v4H3zM10 6.500h4M10 10h4M9.500 2v10",
  "M1.500 1.500h13v11h-13zM6 1v12M10.500 1v12M1 5h13M1 9h13",
  "M4.500 1.500h10v11h-10zM2 4h5M2 10h5",
];

export default function App() {
  return (
    <Page>
      <GlobalStyle />
      <Header>
        <AppTitle>Project Professional</AppTitle>
        <HeaderLayer>
          <HeaderLeft>
            <QuickBar>
              <button aria-label="保存">
                <Svg w={14} h={14}>
                  <path d="M1 1h12v12H1zM3 7h8" fill="none" stroke="#fff" strokeWidth="2" />
                  <path d="M4 10h6v4H4z" fill="#fff" />
                  <path d="M5 11h2v3H5z" fill={GREEN} />
                </Svg>
              </button>
              <button aria-label="撤消">
                <Svg w={30} h={14}>
                  <path d="M9 1 4 5l5 4M4 5h7q5 0 5 4t-5 4" fill="none" stroke="#6b9b69" strokeWidth="2" />
                  <path d="M23 5h6l-3 3z" fill="#6b9b69" />
                </Svg>
              </button>
              <button aria-label="恢复">
                <Svg w={30} h={14}>
                  <path d="M11 1l5 4-5 4M16 5H9Q4 5 4 9t5 4" fill="none" stroke="#6b9b69" strokeWidth="2" />
                  <path d="M22 5h6l-3 3z" fill="#6b9b69" />
                </Svg>
              </button>
              <button aria-label="自定义">
                <Svg w={8} h={10}>
                  <path d="M1 2.500h6" stroke="#fff" />
                  <path d="M1 5h6L4 8z" fill="#fff" />
                </Svg>
              </button>
            </QuickBar>
            <Tabs>
              <Tab $wide>文件</Tab>
              <Tab>任务</Tab>
              <Tab>资源</Tab>
              <Tab>报表</Tab>
              <Tab>项目</Tab>
              <Tab $active>视图</Tab>
              <Tab>团队</Tab>
            </Tabs>
          </HeaderLeft>
          <ContextTabs>
            甘特图工具
            <ContextTab>格式</ContextTab>
          </ContextTabs>
          <TellMe>
            <Svg w={12} h={15}>
              <path d="M4 10q0-2-2-4 0-5 4-5t4 5q-2 2-2 4zM4 12.500h4M5 14.500h2" fill="none" stroke="#b9cfb8" />
            </Svg>
            告诉我您想要做什么...
          </TellMe>
          <HeaderRight>
            <WindowButtons>
              <button aria-label="最小化">
                <Svg w={13} h={14}>
                  <path d="M2 9h9" stroke="#fff" strokeWidth="2" />
                </Svg>
              </button>
              <button aria-label="还原">
                <Svg w={13} h={14}>
                  <path d="M4 3h8M1 6h8" stroke="#fff" strokeWidth="2" />
                  <path d="M11.500 3v5.500H9M4.500 2v3M1.500 6v5.500h7V6" fill="none" stroke="#fff" />
                </Svg>
              </button>
              <button aria-label="关闭">
                <Svg w={13} h={14}>
                  <path d="M3 3l8 8M11 3l-8 8" stroke="#fff" strokeWidth="2.500" />
                </Svg>
              </button>
            </WindowButtons>
            <SignIn href="#">登录</SignIn>
          </HeaderRight>
        </HeaderLayer>
      </Header>

      <Ribbon>
        <Group width={200} label="任务视图">
          <Big icon={<GanttBig />} lines={["甘特图"]} width={42} caret pressed />
          <Big icon={<UsageBig />} lines={["任务", "分配状况"]} width={63} caret />
          <Column>
            <Small icon={<NetworkSmall />} text="网络图" caret gap={9} />
            <Small icon={<CalendarSmall />} text="日历" caret gap={9} />
            <Small icon={<OtherSmall />} text="其他视图" caret />
          </Column>
        </Group>
        <Group width={172} label="资源视图" pad={2} gap={2}>
          <Big icon={<TeamBig />} lines={["工作组", "规划器"]} width={52} caret />
          <Column>
            <Small icon={<ResUsageSmall />} text="资源使用状况" caret gap={9} />
            <Small icon={<ResSheetSmall />} text="资源工作表" caret gap={9} />
            <Small icon={<ResOtherSmall />} text="其他视图" caret />
          </Column>
        </Group>
        <Group width={308} label="数据">
          <Big icon={<SortBig />} lines={["排序"]} width={42} caret />
          <Big icon={<OutlineBig />} lines={["大纲"]} width={42} caret />
          <Big icon={<TablesBig />} lines={["表格"]} width={45} caret />
          <Column>
            <FieldRow>
              <HighlightSmall />
              突出显示:
              <Drop value="[非突出显示]" />
            </FieldRow>
            <FieldRow>
              <FilterSmall />
              筛选器:
              <Drop value="[无筛选器]" />
            </FieldRow>
            <FieldRow>
              <GroupSmall />
              分组依据:
              <Drop value="[不分组]" />
            </FieldRow>
          </Column>
        </Group>
        <Group width={263} label="显示比例">
          <Column>
            <SmallBtn as="label" htmlFor="scale">时间刻度:</SmallBtn>
            <SelectBox>
              <Select id="scale" defaultValue="[7] 天">
                <option>[7] 天</option>
              </Select>
              <Caret />
            </SelectBox>
          </Column>
          <Big icon={<ZoomBig />} lines={["显示比例"]} width={53} caret />
          <Big icon={<WholeBig />} lines={["完整项目"]} width={53} />
          <Big icon={<SelectedBig />} lines={["所选任务"]} width={53} />
        </Group>
        <Group width={181} label="拆分视图" pad={7}>
          <Column>
            <Check>
              <Tick type="checkbox" defaultChecked />
              日程表
            </Check>
            <Check>
              <Tick type="checkbox" />
              详细信息
            </Check>
          </Column>
          <Column>
            <Drop value="日程表" label="日程表视图" />
            <Drop value="" disabled label="详细信息视图" />
          </Column>
        </Group>
        <Group width={147} label="窗口" pad={2} gap={4}>
          <Big icon={<NewWindowBig />} lines={["新建窗口"]} width={53} />
          <Column>
            <Small icon={<SwitchSmall />} text="切换窗口" caret />
            <Small icon={<ArrangeSmall />} text="全部重排" />
            <Small icon={<HideSmall />} text="隐藏" caret />
          </Column>
        </Group>
        <Group width={51} label="宏">
          <Big icon={<MacroBig />} lines={["宏"]} width={42} caret />
        </Group>
        <CollapseBtn aria-label="折叠功能区">
          <Svg w={10} h={7}>
            <path d="M1 6l4-4 4 4" fill="none" stroke="#666" strokeWidth="2" />
          </Svg>
        </CollapseBtn>
      </Ribbon>

      <Body>
        <ViewBar>
          <ViewList>
            {views.map((v, i) => (
              <ViewItem key={i}>
                <ViewIcon $active={i === 0}>
                  <ViewArt kind={v.kind} badge={v.badge} />
                </ViewIcon>
                {v.label}
              </ViewItem>
            ))}
          </ViewList>
          <MoreViews aria-label="更多视图">
            <Svg w={8} h={5}>
              <path d="M0 0h8L4 5z" fill="#000" />
            </Svg>
          </MoreViews>
        </ViewBar>
        <Main>
          <TopWindow>
            <WindowTitle $dim>
              <WindowName>项目1:2</WindowName>
            </WindowTitle>
            <ResourceTable />
          </TopWindow>
          <BottomWindow>
            <WindowTitle>
              <Svg w={16} h={16}>
                <path d="M3.500 4V1.500h7l3 3v10h-9" fill="#fff" stroke="#999" />
                <path d="M8 7.500h4M8 10.500h4" stroke="#7fb07d" />
                <rect x="1" y="6" width="7" height="8" fill={GREEN} />
                <path d="M3.500 12V8.500h2v2h-2" fill="none" stroke="#fff" />
              </Svg>
              <WindowName>项目1:1</WindowName>
              <TitleTools>
                <button aria-label="最大化">
                  <Svg w={11} h={11}>
                    <rect x=".5" y="1.500" width="9" height="8" fill="none" stroke="#666" />
                    <path d="M0 1.500h10" stroke="#666" strokeWidth="3" />
                  </Svg>
                </button>
                <button aria-label="关闭">
                  <Svg w={11} h={11}>
                    <path d="M1 1l8 9M9 1l-8 9" stroke="#666" strokeWidth="2" />
                  </Svg>
                </button>
              </TitleTools>
            </WindowTitle>
            <TimelineRow>
              <Timeline>
                <EndLabel>
                  开始时间
                  <br />
                  2019年3月13日
                </EndLabel>
                <TickRow>
                  {ticks.map((t, i) => (
                    <DateTick key={t} $dim={i > 6}>
                      {t}
                    </DateTick>
                  ))}
                </TickRow>
                <Span>
                  <SpanPart />
                  <SpanPart $dim />
                  <SpanText>将带有日期的任务添加到日程表</SpanText>
                </Span>
                <EndLabel $end>
                  完成时间
                  <br />
                  2019年7月29日
                </EndLabel>
                <TodayMark>今天</TodayMark>
                <RangeMark>2019年6月30日</RangeMark>
              </Timeline>
              <Scroll vertical thumb={56} after={6} />
            </TimelineRow>
            <HSplit />
            <SplitArea>
              <Pane>
                <PaneView>
                  <TaskTable />
                </PaneView>
                <Scroll thumb={757} after={342} />
              </Pane>
              <VSplit />
              <Pane>
                <PaneView>
                  <Scale>
                    <Months>
                      <Month $width={170} $cut>2019年3月</Month>
                      <Month $width={176}>2019年4月</Month>
                      <Month $width={182}>2019年5月</Month>
                      <Month $width={176}>2019年6月</Month>
                    </Months>
                    <Days>
                      {days.map((d, i) => (
                        <Day key={i}>{d}</Day>
                      ))}
                    </Days>
                  </Scale>
                  <GanttChart />
                </PaneView>
                <Scroll before={59} thumb={332} after={272} />
              </Pane>
              <Scroll vertical thumb={64} after={193} />
            </SplitArea>
          </BottomWindow>
        </Main>
      </Body>

      <Status>
        就绪
        <StatusTask>
          <StatusTaskIcon />
          新任务: 自动计划
        </StatusTask>
        <StatusRight>
          {statusIcons.map((d, i) => (
            <ViewBtn key={d} $active={i === 0} aria-label={`视图 ${i + 1}`}>
              <Svg w={16} h={14}>
                <path d={d} fill="none" stroke="#666" strokeWidth="1.500" />
              </Svg>
            </ViewBtn>
          ))}
          <ZoomBtn aria-label="缩小">-</ZoomBtn>
          <Zoom type="range" defaultValue={50} aria-label="显示比例" />
          <ZoomBtn aria-label="放大">+</ZoomBtn>
          <Watermark>https://blog.csdn.net/Clown_pan</Watermark>
        </StatusRight>
      </Status>
      <TaskBar>
        <Orb />
        <TaskBtn $tint="#c8b56a" $gapAfter={65} />
        <TaskBtn $tint="#5fb05a" />
        <TaskBtn $tint="#58b8d8" />
        <TaskBtn $tint="#e08a96" />
        <TaskBtn $tint="#7088b8" />
        <TaskBtn $tint="#2c6e3c" />
        <ShowDesktop aria-label="显示桌面" />
      </TaskBar>
    </Page>
  );
}
